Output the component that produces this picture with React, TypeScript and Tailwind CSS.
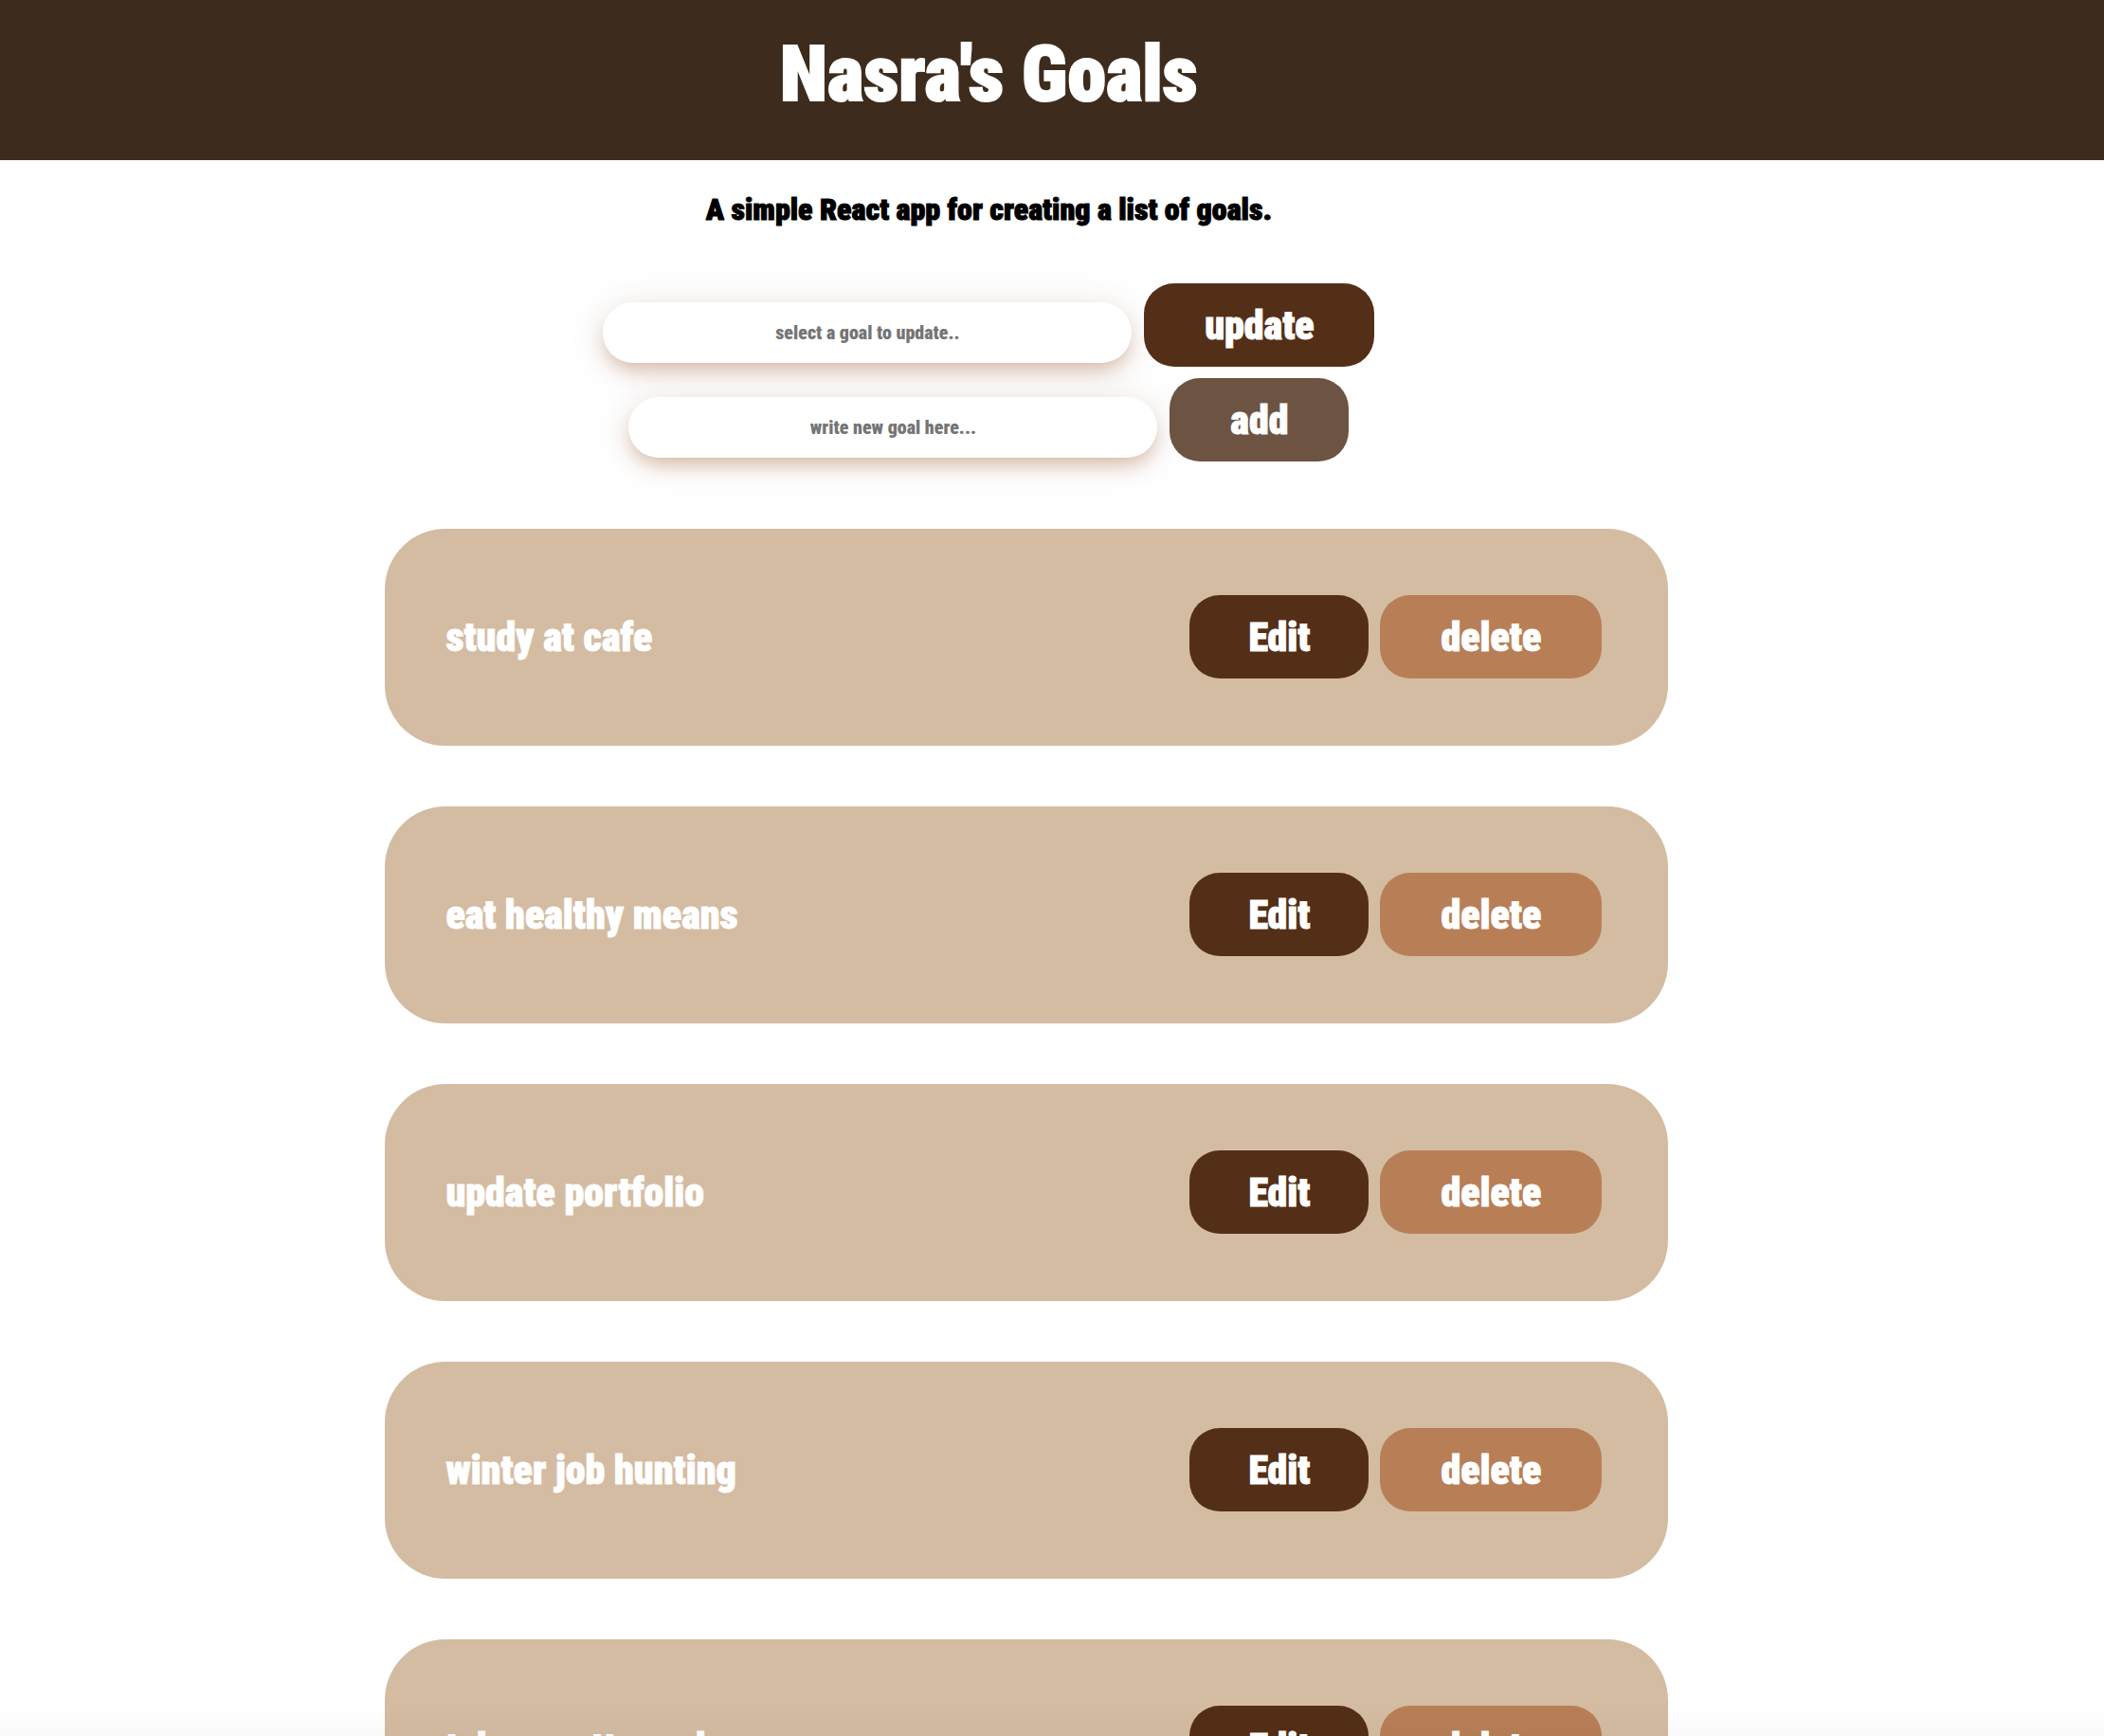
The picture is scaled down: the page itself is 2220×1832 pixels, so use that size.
import { useState } from "react";

const goals = [
  "study at cafe",
  "eat healthy means",
  "update portfolio",
  "winter job hunting",
  "take a pottery class",
];

const buttonClass =
  "flex h-22 items-center justify-center rounded-[32px] pt-0.5 text-[42px] leading-none text-white [-webkit-text-stroke:1px]";
const inputClass =
  "mt-4 h-16 w-[558px] max-w-full rounded-[32px] bg-white text-center text-[20px] text-black placeholder:text-[#757575] outline-none shadow-[0_10px_20px_-4px_rgba(184,127,87,0.5),0_4px_40px_rgba(109,60,40,0.12)]";

export default function App() {
  const [selected, setSelected] = useState("");
  const [draft, setDraft] = useState("");

  return (
    <div className="min-h-screen bg-white font-['Roboto_Condensed','Liberation_Sans',sans-serif] font-black">
      <header className="bg-[#3d2c1d] pt-[26px] pr-[6%] pb-[38px] text-center">
        <h1 className="text-[82px] leading-[105px] text-white [-webkit-text-stroke:2px]">
          Nasra's Goals
        </h1>
      </header>
      <main className="pt-8 pr-[6%]">
        <p className="text-center text-[32px] leading-10 text-black [-webkit-text-stroke:1px]">
          A simple React app for creating a list of goals.
        </p>
        <form className="mt-[58px] flex flex-col gap-3" onSubmit={(e) => e.preventDefault()}>
          <div className="flex items-center justify-center gap-[13px]">
            <input
              aria-label="Goal to update"
              className={inputClass}
              placeholder="select a goal to update.."
              value={selected}
              onChange={(e) => setSelected(e.target.value)}
            />
            <button type="button" className={`${buttonClass} w-[243px] bg-[#542f17]`}>
              update
            </button>
          </div>
          <div className="flex items-center justify-center gap-[13px]">
            <input
              aria-label="New goal"
              className={inputClass}
              placeholder="write new goal here..."
              value={draft}
              onChange={(e) => setDraft(e.target.value)}
            />
            <button type="submit" className={`${buttonClass} w-[189px] bg-[#6d5341]`}>
              add
            </button>
          </div>
        </form>
        <ul className="mt-[71px] flex flex-col items-center gap-16 pl-20">
          {goals.map((goal) => (
            <li
              key={goal}
              className="flex w-full max-w-[1354px] items-center justify-between rounded-[64px] bg-[#d4bca2] pt-[70px] pr-[70px] pb-[71px] pl-16"
            >
              <span className="pt-0.5 text-[42px] leading-[86px] text-white [-webkit-text-stroke:1px]">
                {goal}
              </span>
              <div className="flex gap-3">
                <button
                  type="button"
                  className={`${buttonClass} w-[189px] bg-[#542f17]`}
                  onClick={() => setSelected(goal)}
                >
                  Edit
                </button>
                <button type="button" className={`${buttonClass} w-[234px] bg-[#b87f57]`}>
                  delete
                </button>
              </div>
            </li>
          ))}
        </ul>
      </main>
      <div className="pointer-events-none fixed inset-x-0 bottom-0 h-8 bg-linear-to-b from-transparent to-black/2" />
    </div>
  );
}
